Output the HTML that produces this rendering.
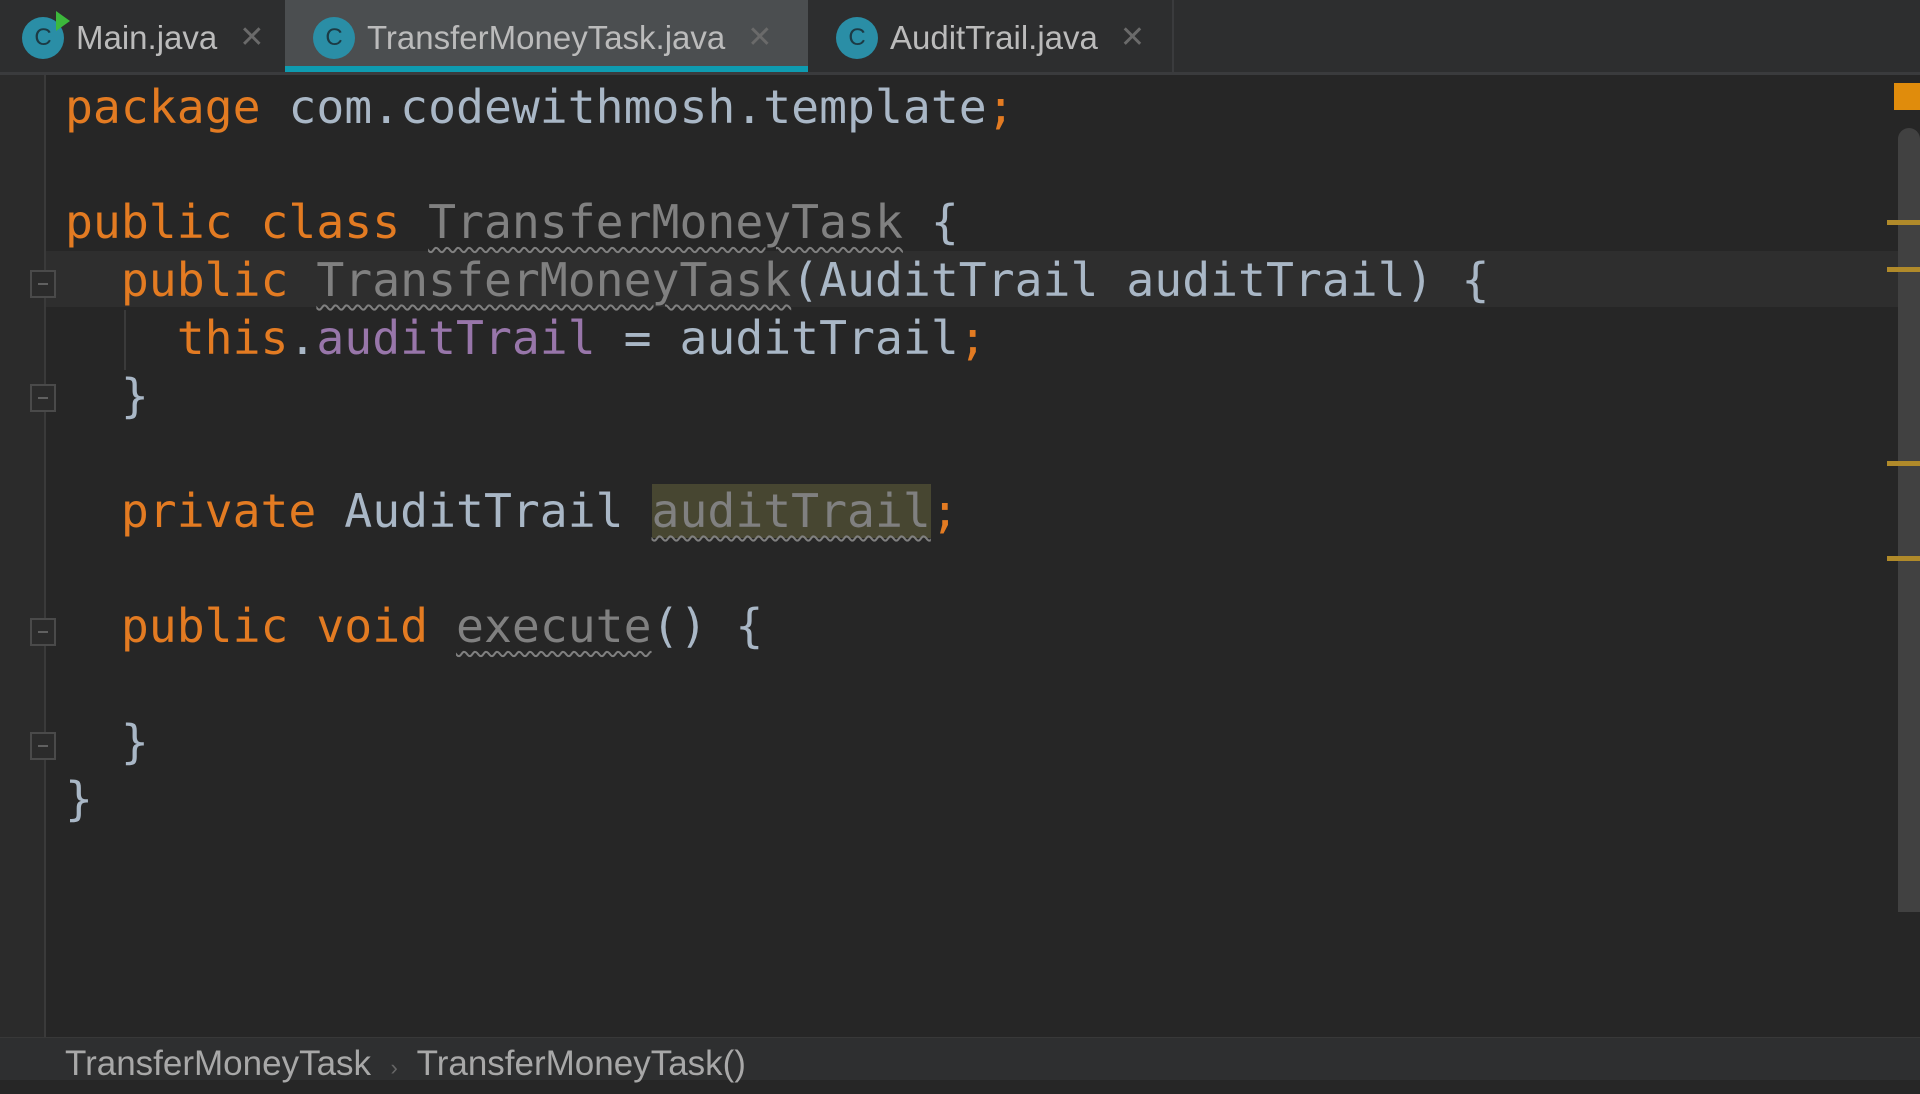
<!DOCTYPE html>
<html><head><meta charset="utf-8"><style>
body{margin:0;width:1920px;height:1080px;background:#262626;overflow:hidden;position:relative;font-family:"Liberation Sans",sans-serif}
.tabs{position:absolute;left:0;top:0;width:1920px;height:72px;background:#2d2e2f;border-bottom:3px solid #3a3b3d}
.tab{position:absolute;top:0;height:72px;display:flex;align-items:center;color:#bbbbbb;font-size:33px;box-sizing:border-box;padding-top:3px}
.tab .ic{width:42px;height:42px;border-radius:50%;background:#2a8ea6;color:#1c3a44;font-size:24px;display:flex;align-items:center;justify-content:center;margin-right:12px;position:relative}
.tab .x{color:#6a6a6a;font-size:30px;margin-left:22px}
.active{background:#4b4e50;border-bottom:6px solid #0e9bb0;padding-top:9px}
.gutter{position:absolute;left:0;top:75px;width:44px;height:962px;background:#2b2b2b;border-right:2px solid #3a3a3a}
.code{position:absolute;left:65px;font-family:"DejaVu Sans Mono",monospace;font-size:46.4px;white-space:pre;color:#a9b7c6;line-height:57.7px}
.k{color:#e37b22}.p{color:#9876aa}.u{color:#808080;text-decoration:underline wavy #808080;text-underline-offset:8px;text-decoration-thickness:2px}
.hl{background:#474631}
.fold{position:absolute;left:30px;width:26px;height:28px;border:2px solid #4a4a4a;box-sizing:border-box;background:#2b2b2b}
.fold:after{content:"";position:absolute;left:6px;top:11px;width:10px;height:2px;background:#606060}
.bar{position:absolute;right:0;height:5px;background:#b08a2a;width:33px}
</style></head><body>
<div class="tabs">
<div class="tab" style="left:22px"><span class="ic">C<span style="position:absolute;right:-6px;top:-6px;width:0;height:0;border-top:10px solid transparent;border-bottom:10px solid transparent;border-left:14px solid #3cb83c"></span></span>Main.java<span class="x">✕</span></div>
<div class="tab active" style="left:285px;width:523px;padding-left:28px">
<span class="ic">C</span>TransferMoneyTask.java<span class="x">✕</span></div>
<div class="tab" style="left:836px"><span class="ic">C</span>AuditTrail.java<span class="x">✕</span></div>
<div style="position:absolute;left:1172px;top:0;width:2px;height:72px;background:#3a3b3d"></div>
</div>
<div class="gutter"></div>
<div style="position:absolute;left:46px;top:251px;width:1874px;height:56px;background:#2e2e2e"></div>
<div class="fold" style="top:270px"></div>
<div class="fold" style="top:384px"></div>
<div class="fold" style="top:618px"></div>
<div class="fold" style="top:732px"></div>
<div style="position:absolute;left:124px;top:310px;width:2px;height:60px;background:#3a3a3a"></div>
<div class="code" style="top:79px"><span class="k">package</span> com.codewithmosh.template<span class="k">;</span>

<span class="k">public class</span> <span class="u">TransferMoneyTask</span> {
  <span class="k">public</span> <span class="u">TransferMoneyTask</span>(AuditTrail auditTrail) {
    <span class="k">this</span>.<span class="p">auditTrail</span> = auditTrail<span class="k">;</span>
  }

  <span class="k">private</span> AuditTrail <span class="u hl">auditTrail</span><span class="k">;</span>

  <span class="k">public void</span> <span class="u">execute</span>() {

  }
}</div>
<div style="position:absolute;left:1898px;top:128px;width:22px;height:784px;background:#414141;border-radius:11px 11px 0 0"></div>
<div style="position:absolute;left:1894px;top:83px;width:26px;height:27px;background:#e08c0c"></div>
<div class="bar" style="top:220px"></div>
<div class="bar" style="top:267px"></div>
<div class="bar" style="top:461px"></div>
<div class="bar" style="top:556px"></div>
<div style="position:absolute;left:0;top:1037px;width:1920px;height:43px;background:#2e2f30;border-top:1px solid #383838;color:#a8a8a8;font-size:35px;line-height:52px;padding-left:65px;box-sizing:border-box;white-space:pre">TransferMoneyTask  <span style="color:#666;font-size:22px">›</span>  TransferMoneyTask()</div>
</body></html>
